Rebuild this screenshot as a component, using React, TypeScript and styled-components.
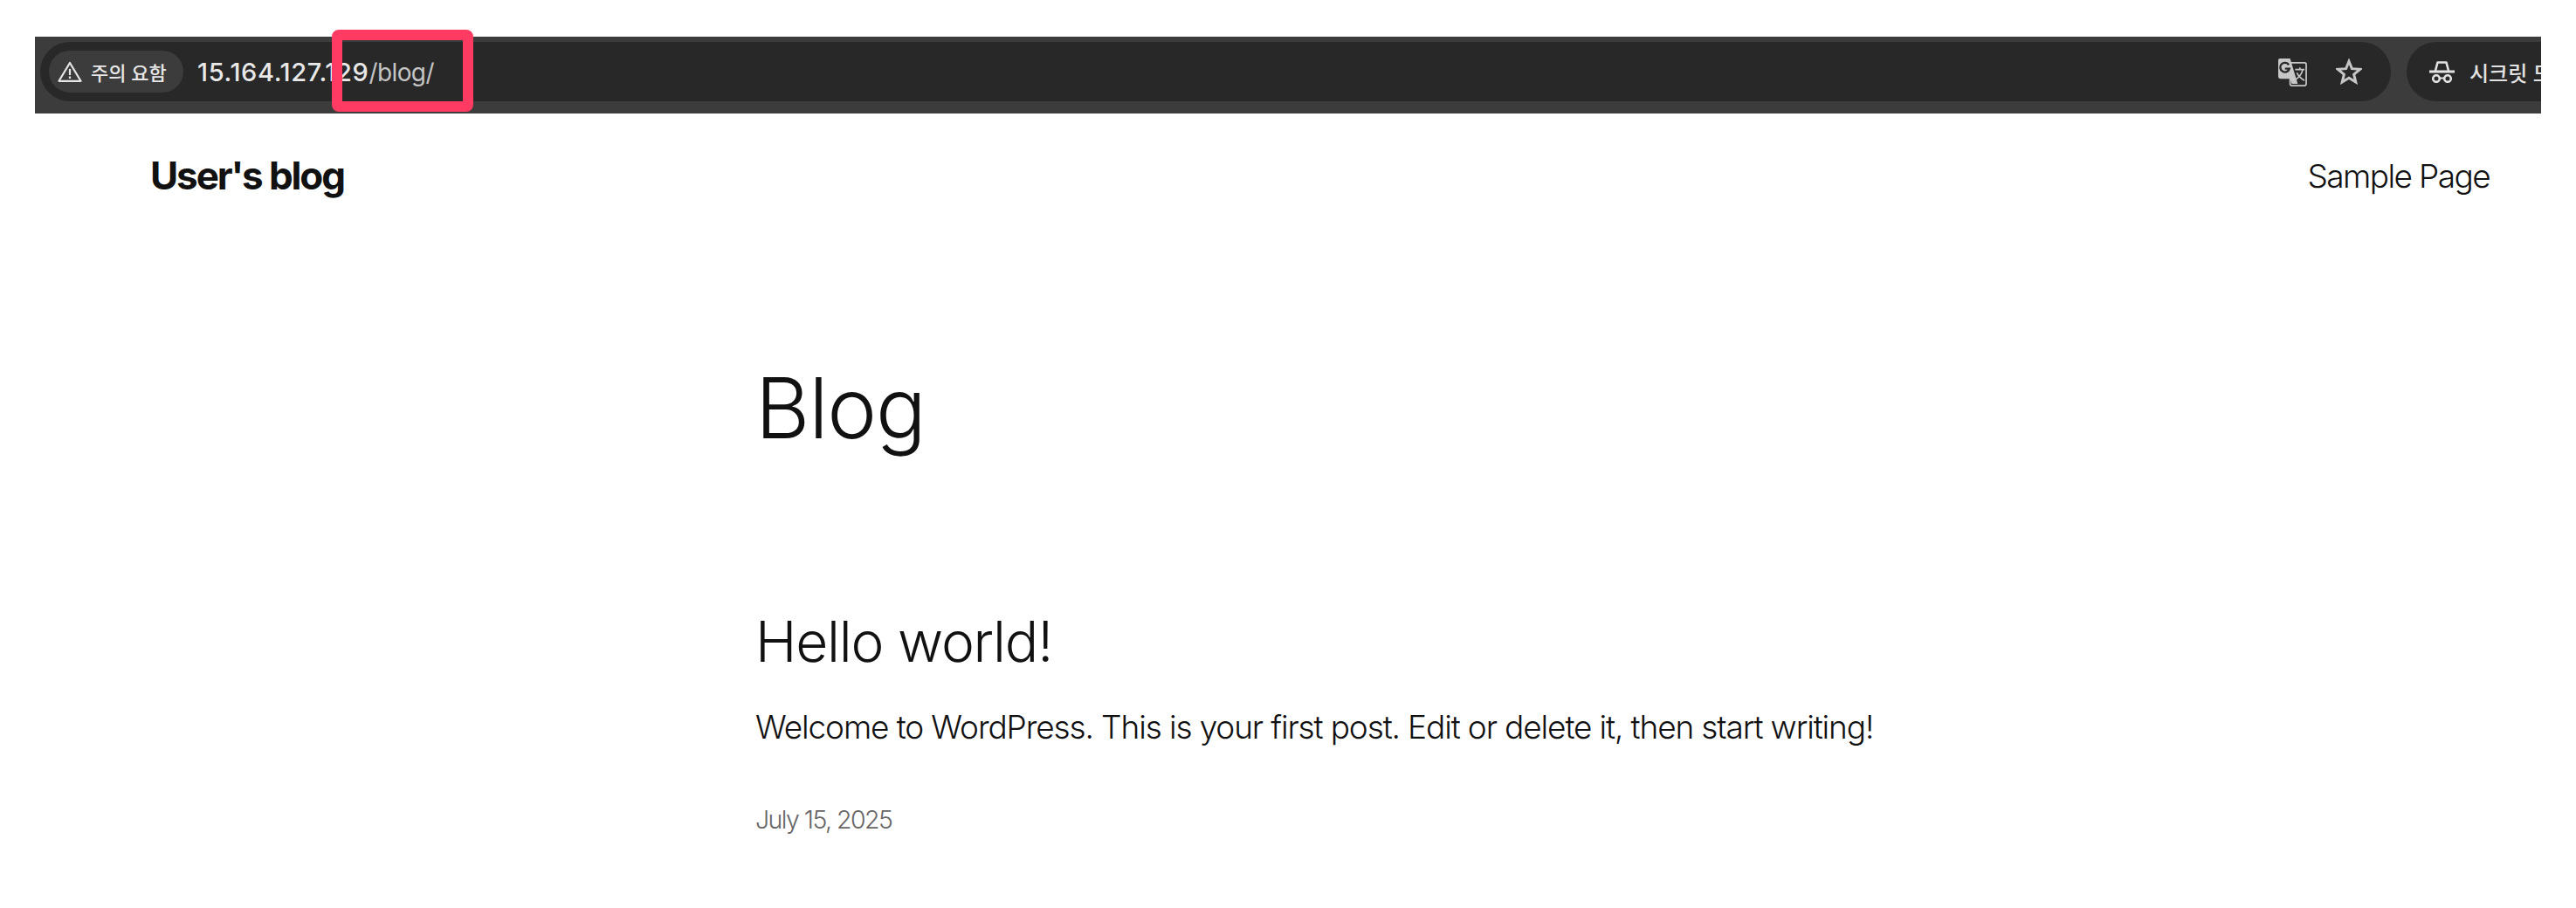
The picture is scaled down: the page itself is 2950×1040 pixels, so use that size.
import React from 'react';
import styled, { createGlobalStyle } from 'styled-components';

const GlobalStyle = createGlobalStyle`
  html, body {
    margin: 0;
    padding: 0;
    background: #ffffff;
    overflow: hidden;
  }
`;

const Page = styled.div`
  width: 2950px;
  height: 1040px;
  padding: 42px 40px 0;
  box-sizing: border-box;
  font-family: Inter, "Noto Sans CJK KR", sans-serif;
`;

const ToolbarFrame = styled.div`
  position: relative;
`;

const Toolbar = styled.div`
  display: flex;
  gap: 18px;
  height: 88px;
  padding: 6px 0 14px 6px;
  box-sizing: border-box;
  background: #3c3c3c;
  overflow: hidden;
`;

const Omnibox = styled.div`
  flex: 1;
  display: flex;
  align-items: center;
  padding: 0 33px 0 10px;
  background: #282828;
  border-radius: 34px;
`;

const SecurityChip = styled.div`
  display: flex;
  align-items: center;
  gap: 10px;
  width: 154px;
  height: 48px;
  padding-left: 10px;
  box-sizing: border-box;
  background: #3c3c3c;
  border-radius: 24px;
  color: #e6e6e6;
  font-size: 22px;
  font-weight: 500;
`;

const Url = styled.div`
  margin-left: 16px;
  font-size: 29px;
  font-weight: 500;
  letter-spacing: 0.65px;
  color: #e8e8e8;
`;

const UrlPath = styled.span`
  color: #c4c4c4;
  font-size: 28px;
  font-weight: 400;
  letter-spacing: -0.6px;
`;

const OmniIcons = styled.div`
  margin-left: auto;
  display: flex;
  align-items: center;
  gap: 33px;
`;

const ProfilePill = styled.div`
  flex: 0 0 154px;
  display: flex;
  align-items: center;
  gap: 17px;
  padding-left: 26px;
  box-sizing: border-box;
  background: #282828;
  border-radius: 34px 0 0 34px;
  color: #e2e2e2;
  font-size: 24px;
  font-weight: 500;
  white-space: nowrap;
  overflow: hidden;
`;

const Highlight = styled.div`
  position: absolute;
  left: 340px;
  top: -8px;
  width: 162px;
  height: 94px;
  box-sizing: border-box;
  border: 12px solid #ff3b63;
  border-radius: 8px;
`;

const SiteHeader = styled.header`
  display: flex;
  align-items: center;
  justify-content: space-between;
  height: 142px;
  padding: 0 59px 0 132px;
  color: #111111;
`;

const SiteTitle = styled.div`
  font-size: 44px;
  font-weight: 700;
  letter-spacing: -2.1px;
`;

const NavLink = styled.div`
  font-size: 37px;
  font-weight: 300;
  letter-spacing: -1.6px;
`;

const Main = styled.main`
  padding-left: 825px;
  color: #111111;
`;

const PageTitle = styled.h1`
  margin: 137px 0 0;
  font-size: 96px;
  line-height: 116px;
  font-weight: 350;
  letter-spacing: -1.2px;
`;

const PostTitle = styled.h2`
  margin: 171px 0 0;
  font-size: 64px;
  line-height: 78px;
  font-weight: 350;
  letter-spacing: -1.2px;
`;

const Excerpt = styled.p`
  margin: 35px 0 0;
  font-size: 37px;
  line-height: 48px;
  font-weight: 300;
  letter-spacing: -1.13px;
`;

const PostDate = styled.div`
  margin: 63px 0 0;
  font-size: 28.5px;
  line-height: 38px;
  font-weight: 300;
  letter-spacing: -1.55px;
  color: #666666;
`;

const WarningIcon = () => (
  <svg width="28" height="24" viewBox="0 0 28 24" fill="none" stroke="#e6e6e6" strokeWidth="2.2">
    <path d="M14 2 L26.5 22.8 H1.5 Z" strokeLinejoin="round" />
    <path d="M14 9 V16 M14 17.6 V20" />
  </svg>
);

const TranslateIcon = () => (
  <svg width="33" height="33" viewBox="0 0 34 34">
    <rect x="14" y="6" width="19" height="27" rx="2" fill="#282828" stroke="#c7c7c7" strokeWidth="1.8" />
    <path d="M2 1 H14 L23 31 H16 L14 25 H3 Q0 25 0 22 V3 Q0 1 2 1 Z" fill="#c7c7c7" />
    <path d="M12.5 8.5 A5.5 5.5 0 1 0 13.2 13 H8" fill="none" stroke="#282828" strokeWidth="2.4" />
    <path d="M20 14 H31 M25.5 11.5 V14 M29 14 Q27 22 20 26 M22 18 Q25 24 31 27" fill="none" stroke="#c7c7c7" strokeWidth="1.7" />
  </svg>
);

const StarIcon = () => (
  <svg width="30" height="30" viewBox="0 0 32 32" fill="none" stroke="#c7c7c7" strokeWidth="3.2" strokeLinejoin="miter">
    <path d="M16 3.5 L19.6 12.4 L29.5 13.2 L22 19.4 L24.3 28.8 L16 23.8 L7.7 28.8 L10 19.4 L2.5 13.2 L12.4 12.4 Z" />
  </svg>
);

const IncognitoIcon = () => (
  <svg width="29" height="26" viewBox="0 0 29 26" fill="none" stroke="#e2e2e2" style={{ flexShrink: 0 }}>
    <path d="M7 12 L9.5 2.5 H19.5 L22 12" strokeWidth="2.6" strokeLinejoin="round" />
    <path d="M0 13 H29" strokeWidth="3.2" />
    <circle cx="8" cy="21" r="3.8" strokeWidth="2.6" />
    <circle cx="21" cy="21" r="3.8" strokeWidth="2.6" />
    <path d="M11.5 20.5 H17.5" strokeWidth="2.2" />
  </svg>
);

export default function App() {
  return (
    <Page>
      <GlobalStyle />
      <ToolbarFrame>
        <Toolbar>
          <Omnibox>
            <SecurityChip>
              <WarningIcon />
              주의 요함
            </SecurityChip>
            <Url>
              15.164.127.129<UrlPath>/blog/</UrlPath>
            </Url>
            <OmniIcons>
              <TranslateIcon />
              <StarIcon />
            </OmniIcons>
          </Omnibox>
          <ProfilePill>
            <IncognitoIcon />
            시크릿 모드
          </ProfilePill>
        </Toolbar>
        <Highlight />
      </ToolbarFrame>
      <SiteHeader>
        <SiteTitle>User's blog</SiteTitle>
        <NavLink>Sample Page</NavLink>
      </SiteHeader>
      <Main>
        <PageTitle>Blog</PageTitle>
        <PostTitle>Hello world!</PostTitle>
        <Excerpt>Welcome to WordPress. This is your first post. Edit or delete it, then start writing!</Excerpt>
        <PostDate>July 15, 2025</PostDate>
      </Main>
    </Page>
  );
}
